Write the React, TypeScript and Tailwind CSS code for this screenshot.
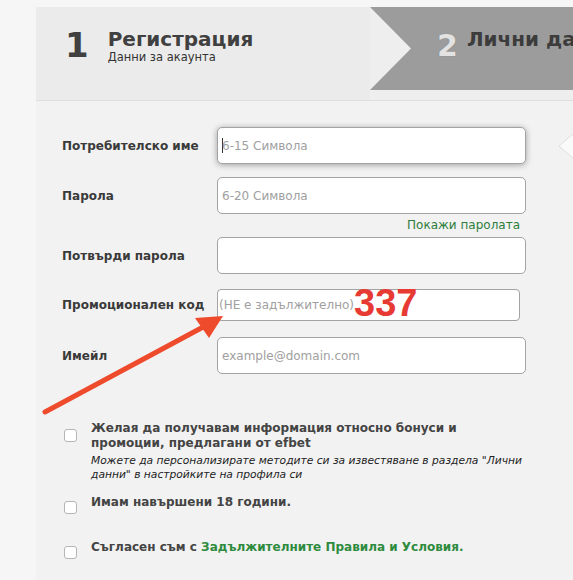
import React from "react";

const Field = ({
  label,
  placeholder,
  className,
  focused,
}: {
  label: string;
  placeholder?: string;
  className?: string;
  focused?: boolean;
}) => (
  <div className={`flex items-center ${className ?? ""}`}>
    <div className="w-[155px] shrink-0 text-[12px] font-bold text-[#3a3a3a]">{label}</div>
    <div
      className={`flex h-[37px] w-[309px] items-center rounded-[5px] border border-[#a3a3a3] bg-white pl-[4px] text-[12px] text-[#a0a0a0] ${
        focused ? "shadow-[0_1px_6px_rgba(0,0,0,0.35)]" : ""
      }`}
    >
      {focused && <span className="mr-[-1px] h-[15px] w-px bg-[#333]" />}
      {placeholder}
    </div>
  </div>
);

const Check = ({ children, className }: { children: React.ReactNode; className?: string }) => (
  <div className={`flex items-start ${className ?? ""}`}>
    <div className="mt-[8px] ml-[2px] h-[13px] w-[13px] shrink-0 rounded-[3px] border border-[#b5b5b5] bg-white" />
    <div className="ml-[14px]">{children}</div>
  </div>
);

export default function App() {
  return (
    <div className="relative h-[580px] w-[573px] overflow-hidden bg-[#f6f6f6] font-['DejaVu_Sans',sans-serif]">
      <div className="ml-[36px] mt-[7px] min-h-[573px] bg-[#f2f2f2]">
        {/* steps header */}
        <div className="flex h-[94px] border-b border-[#dedede] bg-[#eeeeee]">
          <div className="flex w-[334px] shrink-0 items-start bg-[#ebebeb] pl-[29px] pt-[21px]">
            <div className="text-[34px] font-bold leading-[34px] text-[#404040]">1</div>
            <div className="ml-[19px]">
              <div className="text-[20px] font-bold leading-[22px] text-[#404040]">Регистрация</div>
              <div className="text-[11.5px] leading-[14px] text-[#333]">Данни за акаунта</div>
            </div>
          </div>
          <div className="h-[83px] flex-1 bg-[#9c9c9c] pl-[67px] pt-[21px] [clip-path:polygon(0_0,100%_0,100%_100%,0_100%,41px_50%)]">
            <div className="flex items-start">
              <span className="mt-[3px] text-[30px] font-bold leading-[30px] text-[#e2e2e2] [text-shadow:0_0_1px_#777]">2</span>
              <span className="ml-[9px] whitespace-nowrap text-[20px] font-bold leading-[22px] text-[#3c3c3c]">Лични данни</span>
            </div>
          </div>
        </div>

        {/* form */}
        <div className="pl-[26px] pt-[26px]">
          <Field label="Потребителско име" placeholder="6-15 Символа" focused />
          <Field label="Парола" placeholder="6-20 Символа" className="mt-[13px]" />
          <div className="w-[458px] text-right text-[12px] leading-[22px] text-[#2f7d3b]">Покажи паролата</div>
          <Field label="Потвърди парола" className="mt-[1px]" />
          <div className="mt-[15px] flex items-center">
            <div className="w-[155px] shrink-0 text-[12px] font-bold text-[#3a3a3a]">Промоционален код</div>
            <div className="flex h-[32px] w-[303px] items-center rounded-[4px] border border-[#a3a3a3] bg-white pl-[1px] text-[12px] text-[#a0a0a0]">
              (НЕ е задължително)
            </div>
          </div>
          <Field label="Имейл" placeholder="example@domain.com" className="mt-[16px]" />

          <div className="mt-[47px] text-[12px] text-[#444]">
            <Check>
              <div className="font-bold leading-[15px]">Желая да получавам информация относно бонуси и</div>
              <div className="font-bold leading-[15px]">промоции, предлагани от efbet</div>
              <div className="mt-[3px] w-[450px] text-[10.7px] italic leading-[14px] text-[#222]">
                Можете да персонализирате методите си за известяване в раздела "Лични данни" в настройките на профила си
              </div>
            </Check>
            <Check className="mt-[11px]">
              <div className="pt-[2px] font-bold leading-[15px]">Имам навършени 18 години.</div>
            </Check>
            <Check className="mt-[24px]">
              <div className="pt-[2px] font-bold leading-[15px]">
                Съгласен съм с <span className="text-[#2e8b3e]">Задължителните Правила и Условия.</span>
              </div>
            </Check>
          </div>
        </div>
      </div>

      {/* tooltip pointer at right edge */}
      <svg className="absolute left-[558px] top-[133px]" width="16" height="26" viewBox="0 0 16 26">
        <polygon points="16,0 1,13 16,26" fill="#fafafa" stroke="#dddddd" strokeWidth="1" />
      </svg>

      {/* annotation overlay */}
      <div className="absolute left-[354px] top-[283px] font-['Liberation_Sans',sans-serif] text-[38px] font-bold leading-[40px] text-[#e63a32]">
        337
      </div>
      <svg className="absolute left-0 top-0" width="573" height="580" viewBox="0 0 573 580">
        <line x1="45" y1="412" x2="205" y2="326" stroke="#ee4a2c" strokeWidth="5" strokeLinecap="round" />
        <polygon points="223,316 195,318 209,338" fill="#ee4a2c" />
      </svg>
    </div>
  );
}
